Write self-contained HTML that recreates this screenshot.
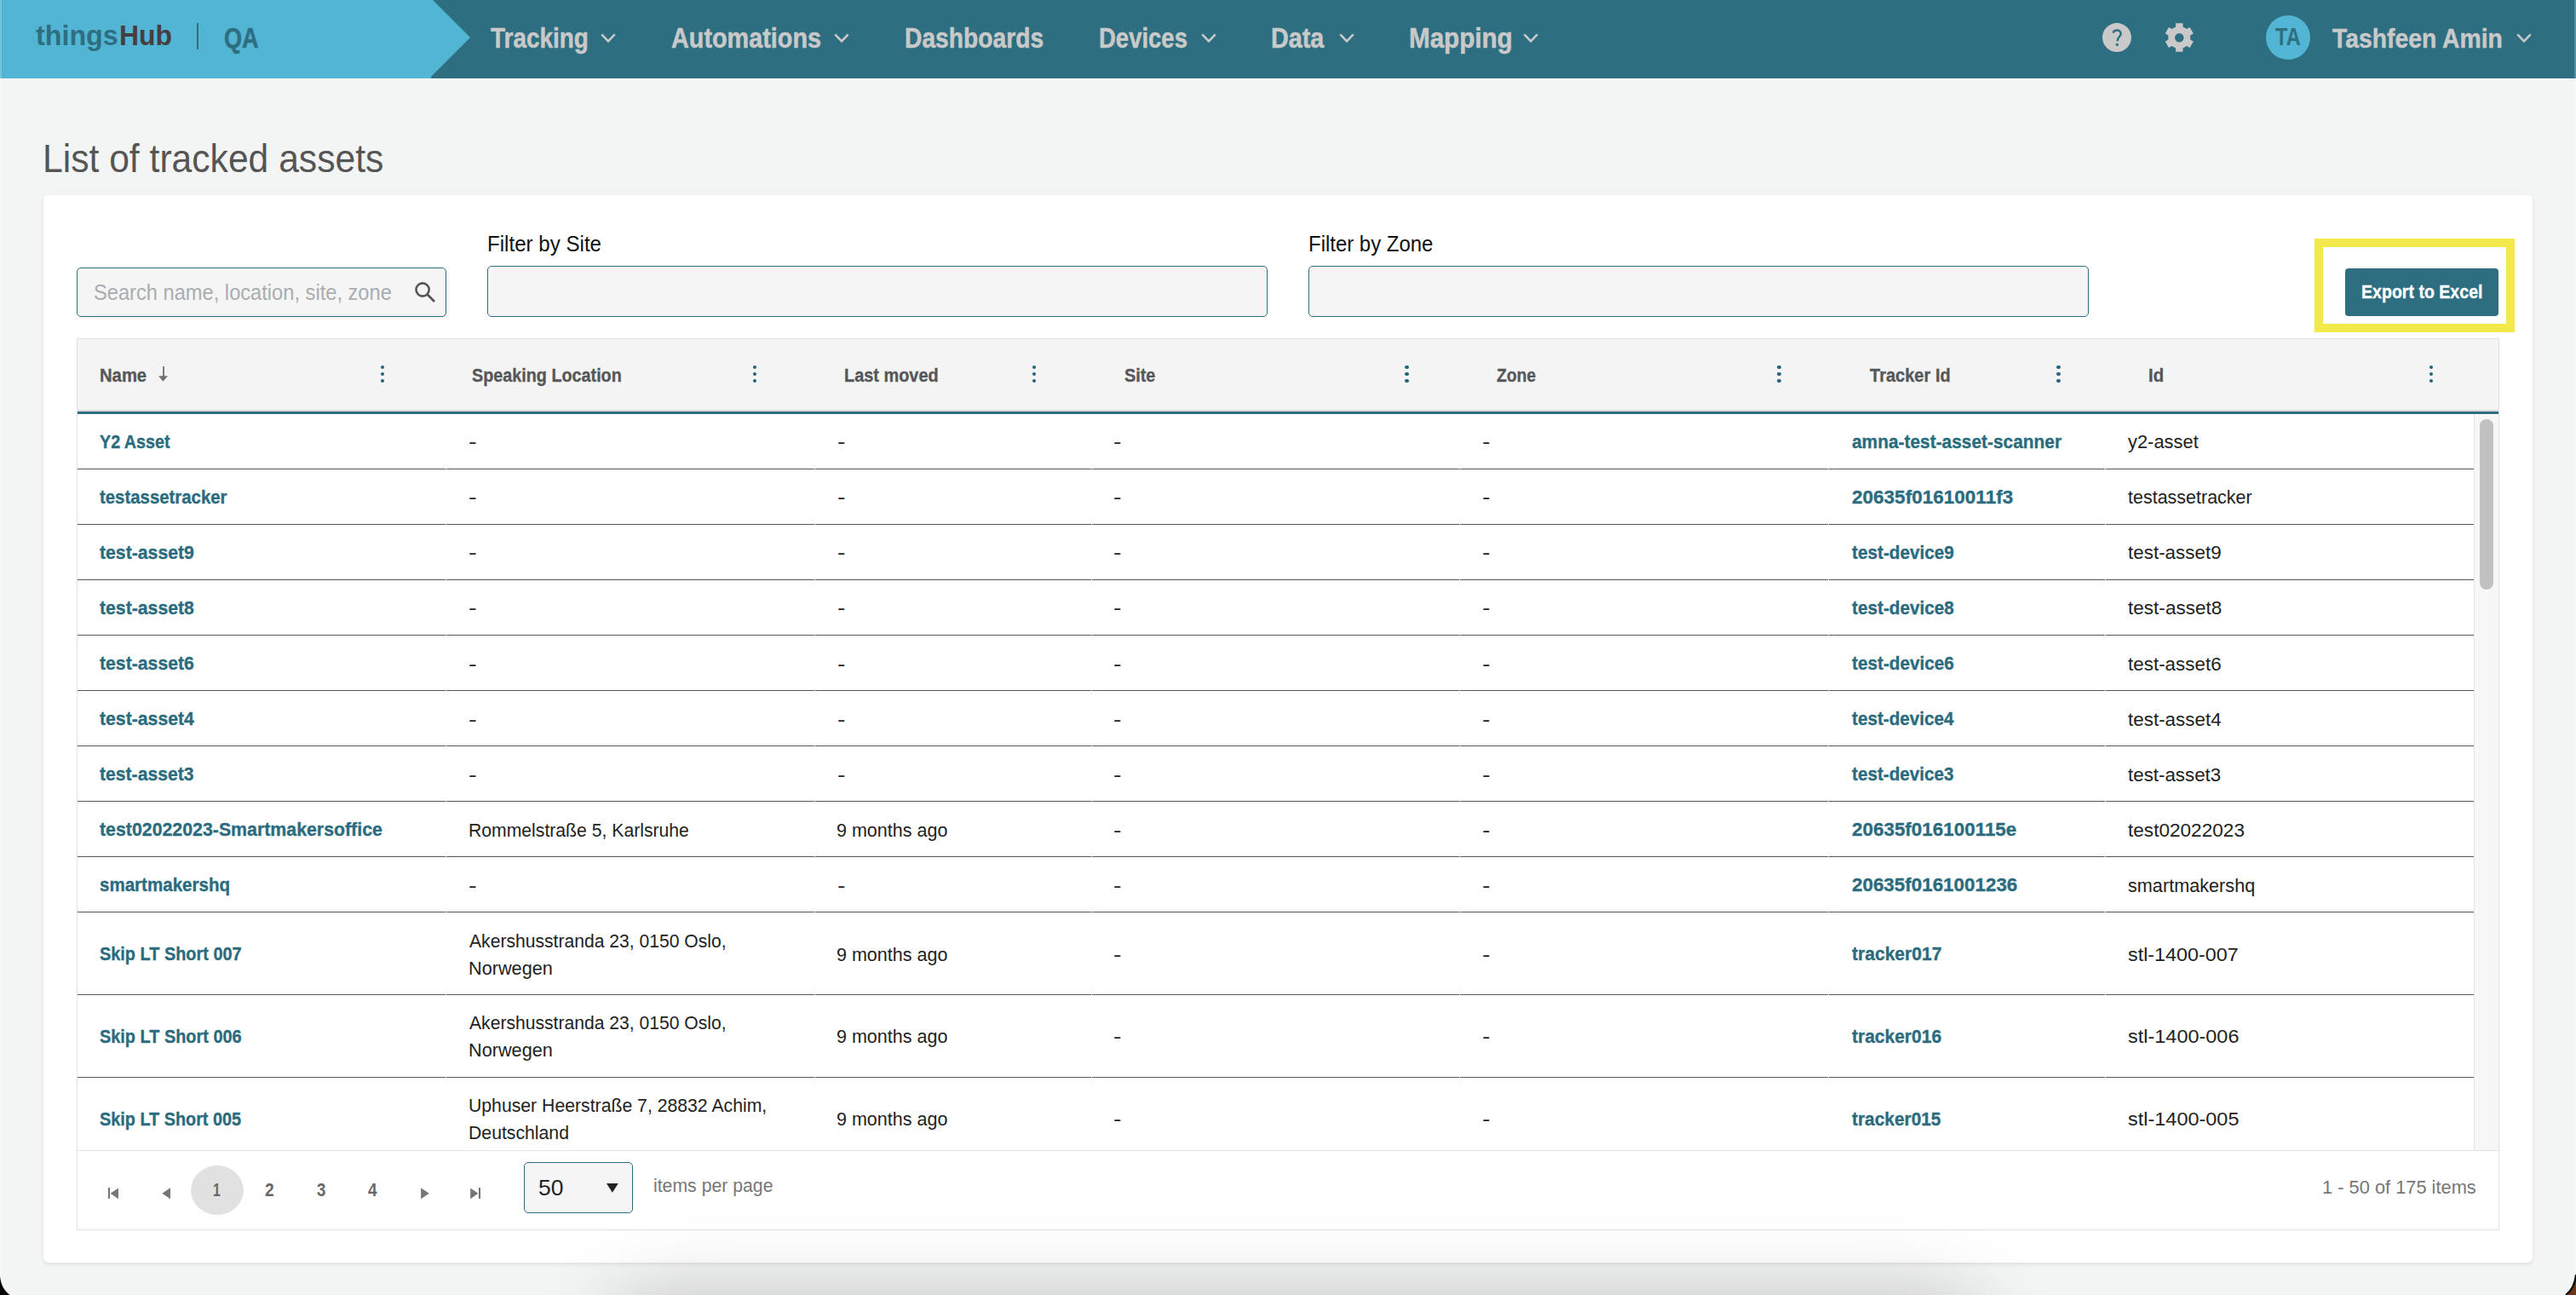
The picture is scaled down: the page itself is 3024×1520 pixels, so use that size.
<!DOCTYPE html>
<html><head><meta charset="utf-8"><style>
html,body{margin:0;padding:0;width:3024px;height:1520px;overflow:hidden;background:#F3F5F4;font-family:"Liberation Sans", sans-serif;}
</style></head><body>
<div style="position:absolute;left:0px;top:0px;width:3024px;height:92px;background:#2E6E81"></div>
<svg style="position:absolute;left:0;top:0" width="600" height="92"><polygon points="0,0 508,0 552,44 506,90 506,92 0,92" fill="#53B5D4"/></svg>
<div style="position:absolute;left:0px;top:0px;width:2px;height:92px;background:#74C4DC"></div>
<div style="position:absolute;left:3022px;top:0px;width:2px;height:92px;background:#5C8E9D"></div>
<div style="position:absolute;left:0px;top:92px;width:2px;height:1428px;background:rgba(255,255,255,0.3)"></div>
<div style="position:absolute;left:3022px;top:92px;width:2px;height:1428px;background:rgba(255,255,255,0.3)"></div>
<div style="position:absolute;left:231px;top:27px;width:2.2px;height:31px;background:#2E6E81"></div>
<svg style="position:absolute;left:703px;top:37.2px" width="22" height="14.5"><polyline points="3.3,3.3 11.0,11.46 18.7,3.3" fill="none" stroke="#C9C9C9" stroke-width="2.6" stroke-linecap="butt"/></svg>
<svg style="position:absolute;left:977px;top:37.2px" width="22" height="14.5"><polyline points="3.3,3.3 11.0,11.46 18.7,3.3" fill="none" stroke="#C9C9C9" stroke-width="2.6" stroke-linecap="butt"/></svg>
<svg style="position:absolute;left:1407.5px;top:37.2px" width="22" height="14.5"><polyline points="3.3,3.3 11.0,11.46 18.7,3.3" fill="none" stroke="#C9C9C9" stroke-width="2.6" stroke-linecap="butt"/></svg>
<svg style="position:absolute;left:1569.5px;top:37.2px" width="22" height="14.5"><polyline points="3.3,3.3 11.0,11.46 18.7,3.3" fill="none" stroke="#C9C9C9" stroke-width="2.6" stroke-linecap="butt"/></svg>
<svg style="position:absolute;left:1786px;top:37.2px" width="22" height="14.5"><polyline points="3.3,3.3 11.0,11.46 18.7,3.3" fill="none" stroke="#C9C9C9" stroke-width="2.6" stroke-linecap="butt"/></svg>
<svg style="position:absolute;left:2467px;top:27px" width="36" height="36" viewBox="0 0 36 36">
<circle cx="18" cy="17.1" r="17" fill="#C9C9C9"/>
<path d="M13.6 11.6 C14.2 9.4 16 8.5 18.1 8.5 C20.8 8.5 22.7 10.2 22.7 12.6 C22.7 15.6 19.7 16.4 19 19.2 L18.7 21.2" fill="none" stroke="#2E6E81" stroke-width="2.4"/>
<circle cx="18.3" cy="25.4" r="1.7" fill="#2E6E81"/>
</svg>
<svg style="position:absolute;left:2540px;top:26px" width="37" height="37" viewBox="0 0 37 37">
<path d="M31.24 15.38 L34.84 13.30 L30.64 6.02 L27.04 8.11 L22.50 5.49 L22.50 1.32 L14.10 1.32 L14.10 5.49 L9.56 8.11 L5.96 6.02 L1.76 13.30 L5.36 15.38 L5.36 20.62 L1.76 22.70 L5.96 29.98 L9.56 27.89 L14.10 30.51 L14.10 34.68 L22.50 34.68 L22.50 30.51 L27.04 27.89 L30.64 29.98 L34.84 22.70 L31.24 20.62 Z" fill="#C9C9C9"/>
<circle cx="18.3" cy="18.2" r="5.2" fill="#2E6E81"/>
</svg>
<div style="position:absolute;left:2660px;top:17.8px;width:52px;height:52px;border-radius:50%;background:#53B5D4"></div>
<svg style="position:absolute;left:2951.8px;top:37.2px" width="22" height="14.5"><polyline points="3.3,3.3 11.0,11.46 18.7,3.3" fill="none" stroke="#C9C9C9" stroke-width="2.6" stroke-linecap="butt"/></svg>
<div style="position:absolute;left:51px;top:229px;width:2922px;height:1253px;background:#fff;border-radius:7px;box-shadow:0 2px 5px rgba(0,0,0,0.09)"></div>
<div style="position:absolute;left:90px;top:314px;width:434px;height:57.5px;box-sizing:border-box;border:1.6px solid #2E6E81;border-radius:5px;background:#F5F5F5;box-shadow:2px 2px 4px rgba(0,0,0,0.06)"></div>
<svg style="position:absolute;left:484px;top:328px" width="30" height="30" viewBox="0 0 30 30">
<circle cx="12.1" cy="12.0" r="7.6" fill="none" stroke="#555" stroke-width="2.6"/>
<line x1="17.6" y1="17.6" x2="26" y2="26" stroke="#555" stroke-width="2.8"/>
</svg>
<div style="position:absolute;left:572px;top:312.2px;width:916px;height:59.5px;box-sizing:border-box;border:1.6px solid #2E6E81;border-radius:5px;background:#F5F5F5"></div>
<div style="position:absolute;left:1536px;top:312.2px;width:916px;height:59.5px;box-sizing:border-box;border:1.6px solid #2E6E81;border-radius:5px;background:#F5F5F5"></div>
<div style="position:absolute;left:2717px;top:280px;width:235px;height:110px;box-sizing:border-box;border:10px solid #F2E94C"></div>
<div style="position:absolute;left:2753px;top:315px;width:180px;height:56px;border-radius:4px;background:#2E6E81"></div>
<div style="position:absolute;left:90px;top:397px;width:2844px;height:1047px;box-sizing:border-box;border:1px solid #E2E2E2"></div>
<div style="position:absolute;left:91px;top:398px;width:2842px;height:83px;background:#F4F4F4"></div>
<div style="position:absolute;left:91px;top:481px;width:2842px;height:2px;background:#DCDCDC"></div>
<div style="position:absolute;left:91px;top:483px;width:2842px;height:3px;background:#2E6E81"></div>
<div style="position:absolute;left:446.70px;top:428.8px;width:4.4px;height:4.4px;border-radius:50%;background:#22657A"></div>
<div style="position:absolute;left:446.70px;top:436.8px;width:4.4px;height:4.4px;border-radius:50%;background:#22657A"></div>
<div style="position:absolute;left:446.70px;top:444.8px;width:4.4px;height:4.4px;border-radius:50%;background:#22657A"></div>
<div style="position:absolute;left:884.00px;top:428.8px;width:4.4px;height:4.4px;border-radius:50%;background:#22657A"></div>
<div style="position:absolute;left:884.00px;top:436.8px;width:4.4px;height:4.4px;border-radius:50%;background:#22657A"></div>
<div style="position:absolute;left:884.00px;top:444.8px;width:4.4px;height:4.4px;border-radius:50%;background:#22657A"></div>
<div style="position:absolute;left:1211.90px;top:428.8px;width:4.4px;height:4.4px;border-radius:50%;background:#22657A"></div>
<div style="position:absolute;left:1211.90px;top:436.8px;width:4.4px;height:4.4px;border-radius:50%;background:#22657A"></div>
<div style="position:absolute;left:1211.90px;top:444.8px;width:4.4px;height:4.4px;border-radius:50%;background:#22657A"></div>
<div style="position:absolute;left:1649.20px;top:428.8px;width:4.4px;height:4.4px;border-radius:50%;background:#22657A"></div>
<div style="position:absolute;left:1649.20px;top:436.8px;width:4.4px;height:4.4px;border-radius:50%;background:#22657A"></div>
<div style="position:absolute;left:1649.20px;top:444.8px;width:4.4px;height:4.4px;border-radius:50%;background:#22657A"></div>
<div style="position:absolute;left:2086.40px;top:428.8px;width:4.4px;height:4.4px;border-radius:50%;background:#22657A"></div>
<div style="position:absolute;left:2086.40px;top:436.8px;width:4.4px;height:4.4px;border-radius:50%;background:#22657A"></div>
<div style="position:absolute;left:2086.40px;top:444.8px;width:4.4px;height:4.4px;border-radius:50%;background:#22657A"></div>
<div style="position:absolute;left:2414.30px;top:428.8px;width:4.4px;height:4.4px;border-radius:50%;background:#22657A"></div>
<div style="position:absolute;left:2414.30px;top:436.8px;width:4.4px;height:4.4px;border-radius:50%;background:#22657A"></div>
<div style="position:absolute;left:2414.30px;top:444.8px;width:4.4px;height:4.4px;border-radius:50%;background:#22657A"></div>
<div style="position:absolute;left:2851.50px;top:428.8px;width:4.4px;height:4.4px;border-radius:50%;background:#22657A"></div>
<div style="position:absolute;left:2851.50px;top:436.8px;width:4.4px;height:4.4px;border-radius:50%;background:#22657A"></div>
<div style="position:absolute;left:2851.50px;top:444.8px;width:4.4px;height:4.4px;border-radius:50%;background:#22657A"></div>
<svg style="position:absolute;left:184px;top:428px" width="16" height="22" viewBox="0 0 16 22">
<line x1="8" y1="2" x2="8" y2="15" stroke="#707070" stroke-width="1.8"/>
<polygon points="2.1,13.2 12.9,13.2 7.5,19.8" fill="#707070"/>
</svg>
<div style="position:absolute;left:91px;top:549.6px;width:2813px;height:1px;background:#56585B"></div>
<div style="position:absolute;left:523.3px;top:549.6px;width:1px;height:1px;background:#DADADA"></div>
<div style="position:absolute;left:956.0px;top:549.6px;width:1px;height:1px;background:#DADADA"></div>
<div style="position:absolute;left:1280.6px;top:549.6px;width:1px;height:1px;background:#DADADA"></div>
<div style="position:absolute;left:1713.4px;top:549.6px;width:1px;height:1px;background:#DADADA"></div>
<div style="position:absolute;left:2146.2px;top:549.6px;width:1px;height:1px;background:#DADADA"></div>
<div style="position:absolute;left:2470.7px;top:549.6px;width:1px;height:1px;background:#DADADA"></div>
<div style="position:absolute;left:91px;top:614.7px;width:2813px;height:1px;background:#56585B"></div>
<div style="position:absolute;left:523.3px;top:614.7px;width:1px;height:1px;background:#DADADA"></div>
<div style="position:absolute;left:956.0px;top:614.7px;width:1px;height:1px;background:#DADADA"></div>
<div style="position:absolute;left:1280.6px;top:614.7px;width:1px;height:1px;background:#DADADA"></div>
<div style="position:absolute;left:1713.4px;top:614.7px;width:1px;height:1px;background:#DADADA"></div>
<div style="position:absolute;left:2146.2px;top:614.7px;width:1px;height:1px;background:#DADADA"></div>
<div style="position:absolute;left:2470.7px;top:614.7px;width:1px;height:1px;background:#DADADA"></div>
<div style="position:absolute;left:91px;top:679.8px;width:2813px;height:1px;background:#56585B"></div>
<div style="position:absolute;left:523.3px;top:679.8px;width:1px;height:1px;background:#DADADA"></div>
<div style="position:absolute;left:956.0px;top:679.8px;width:1px;height:1px;background:#DADADA"></div>
<div style="position:absolute;left:1280.6px;top:679.8px;width:1px;height:1px;background:#DADADA"></div>
<div style="position:absolute;left:1713.4px;top:679.8px;width:1px;height:1px;background:#DADADA"></div>
<div style="position:absolute;left:2146.2px;top:679.8px;width:1px;height:1px;background:#DADADA"></div>
<div style="position:absolute;left:2470.7px;top:679.8px;width:1px;height:1px;background:#DADADA"></div>
<div style="position:absolute;left:91px;top:744.9px;width:2813px;height:1px;background:#56585B"></div>
<div style="position:absolute;left:523.3px;top:744.9px;width:1px;height:1px;background:#DADADA"></div>
<div style="position:absolute;left:956.0px;top:744.9px;width:1px;height:1px;background:#DADADA"></div>
<div style="position:absolute;left:1280.6px;top:744.9px;width:1px;height:1px;background:#DADADA"></div>
<div style="position:absolute;left:1713.4px;top:744.9px;width:1px;height:1px;background:#DADADA"></div>
<div style="position:absolute;left:2146.2px;top:744.9px;width:1px;height:1px;background:#DADADA"></div>
<div style="position:absolute;left:2470.7px;top:744.9px;width:1px;height:1px;background:#DADADA"></div>
<div style="position:absolute;left:91px;top:810.0px;width:2813px;height:1px;background:#56585B"></div>
<div style="position:absolute;left:523.3px;top:810.0px;width:1px;height:1px;background:#DADADA"></div>
<div style="position:absolute;left:956.0px;top:810.0px;width:1px;height:1px;background:#DADADA"></div>
<div style="position:absolute;left:1280.6px;top:810.0px;width:1px;height:1px;background:#DADADA"></div>
<div style="position:absolute;left:1713.4px;top:810.0px;width:1px;height:1px;background:#DADADA"></div>
<div style="position:absolute;left:2146.2px;top:810.0px;width:1px;height:1px;background:#DADADA"></div>
<div style="position:absolute;left:2470.7px;top:810.0px;width:1px;height:1px;background:#DADADA"></div>
<div style="position:absolute;left:91px;top:875.0px;width:2813px;height:1px;background:#56585B"></div>
<div style="position:absolute;left:523.3px;top:875.0px;width:1px;height:1px;background:#DADADA"></div>
<div style="position:absolute;left:956.0px;top:875.0px;width:1px;height:1px;background:#DADADA"></div>
<div style="position:absolute;left:1280.6px;top:875.0px;width:1px;height:1px;background:#DADADA"></div>
<div style="position:absolute;left:1713.4px;top:875.0px;width:1px;height:1px;background:#DADADA"></div>
<div style="position:absolute;left:2146.2px;top:875.0px;width:1px;height:1px;background:#DADADA"></div>
<div style="position:absolute;left:2470.7px;top:875.0px;width:1px;height:1px;background:#DADADA"></div>
<div style="position:absolute;left:91px;top:940.0px;width:2813px;height:1px;background:#56585B"></div>
<div style="position:absolute;left:523.3px;top:940.0px;width:1px;height:1px;background:#DADADA"></div>
<div style="position:absolute;left:956.0px;top:940.0px;width:1px;height:1px;background:#DADADA"></div>
<div style="position:absolute;left:1280.6px;top:940.0px;width:1px;height:1px;background:#DADADA"></div>
<div style="position:absolute;left:1713.4px;top:940.0px;width:1px;height:1px;background:#DADADA"></div>
<div style="position:absolute;left:2146.2px;top:940.0px;width:1px;height:1px;background:#DADADA"></div>
<div style="position:absolute;left:2470.7px;top:940.0px;width:1px;height:1px;background:#DADADA"></div>
<div style="position:absolute;left:91px;top:1005.0px;width:2813px;height:1px;background:#56585B"></div>
<div style="position:absolute;left:523.3px;top:1005.0px;width:1px;height:1px;background:#DADADA"></div>
<div style="position:absolute;left:956.0px;top:1005.0px;width:1px;height:1px;background:#DADADA"></div>
<div style="position:absolute;left:1280.6px;top:1005.0px;width:1px;height:1px;background:#DADADA"></div>
<div style="position:absolute;left:1713.4px;top:1005.0px;width:1px;height:1px;background:#DADADA"></div>
<div style="position:absolute;left:2146.2px;top:1005.0px;width:1px;height:1px;background:#DADADA"></div>
<div style="position:absolute;left:2470.7px;top:1005.0px;width:1px;height:1px;background:#DADADA"></div>
<div style="position:absolute;left:91px;top:1070.0px;width:2813px;height:1px;background:#56585B"></div>
<div style="position:absolute;left:523.3px;top:1070.0px;width:1px;height:1px;background:#DADADA"></div>
<div style="position:absolute;left:956.0px;top:1070.0px;width:1px;height:1px;background:#DADADA"></div>
<div style="position:absolute;left:1280.6px;top:1070.0px;width:1px;height:1px;background:#DADADA"></div>
<div style="position:absolute;left:1713.4px;top:1070.0px;width:1px;height:1px;background:#DADADA"></div>
<div style="position:absolute;left:2146.2px;top:1070.0px;width:1px;height:1px;background:#DADADA"></div>
<div style="position:absolute;left:2470.7px;top:1070.0px;width:1px;height:1px;background:#DADADA"></div>
<div style="position:absolute;left:91px;top:1167.0px;width:2813px;height:1px;background:#56585B"></div>
<div style="position:absolute;left:523.3px;top:1167.0px;width:1px;height:1px;background:#DADADA"></div>
<div style="position:absolute;left:956.0px;top:1167.0px;width:1px;height:1px;background:#DADADA"></div>
<div style="position:absolute;left:1280.6px;top:1167.0px;width:1px;height:1px;background:#DADADA"></div>
<div style="position:absolute;left:1713.4px;top:1167.0px;width:1px;height:1px;background:#DADADA"></div>
<div style="position:absolute;left:2146.2px;top:1167.0px;width:1px;height:1px;background:#DADADA"></div>
<div style="position:absolute;left:2470.7px;top:1167.0px;width:1px;height:1px;background:#DADADA"></div>
<div style="position:absolute;left:91px;top:1263.9px;width:2813px;height:1px;background:#56585B"></div>
<div style="position:absolute;left:523.3px;top:1263.9px;width:1px;height:1px;background:#DADADA"></div>
<div style="position:absolute;left:956.0px;top:1263.9px;width:1px;height:1px;background:#DADADA"></div>
<div style="position:absolute;left:1280.6px;top:1263.9px;width:1px;height:1px;background:#DADADA"></div>
<div style="position:absolute;left:1713.4px;top:1263.9px;width:1px;height:1px;background:#DADADA"></div>
<div style="position:absolute;left:2146.2px;top:1263.9px;width:1px;height:1px;background:#DADADA"></div>
<div style="position:absolute;left:2470.7px;top:1263.9px;width:1px;height:1px;background:#DADADA"></div>
<div style="position:absolute;left:2904px;top:486px;width:29px;height:864px;background:#F7F7F7;border-left:1px solid #E6E6E6;box-sizing:border-box"></div>
<div style="position:absolute;left:2911px;top:492px;width:15.5px;height:200px;border-radius:8px;background:#C1C1C1"></div>
<div style="position:absolute;left:91px;top:1350px;width:2842px;height:1px;background:#E2E2E2"></div>
<svg style="position:absolute;left:0;top:0;overflow:visible" width="1" height="1"><polygon points="129.5,1400.8 139,1394.4 139,1407.2" fill="#767676"/></svg>
<div style="position:absolute;left:127.1px;top:1394.2px;width:1.9px;height:12.8px;background:#767676"></div>
<svg style="position:absolute;left:0;top:0;overflow:visible" width="1" height="1"><polygon points="190.3,1400.8 200,1394.2 200,1407.2" fill="#767676"/></svg>
<div style="position:absolute;left:224px;top:1368px;width:62px;height:58px;border-radius:50%;background:#E1E1E1"></div>
<svg style="position:absolute;left:0;top:0;overflow:visible" width="1" height="1"><polygon points="503.7,1400.8 494.1,1394.2 494.1,1407.2" fill="#767676"/></svg>
<svg style="position:absolute;left:0;top:0;overflow:visible" width="1" height="1"><polygon points="561.3,1400.8 552.2,1394.4 552.2,1407.2" fill="#767676"/></svg>
<div style="position:absolute;left:562px;top:1394.2px;width:1.9px;height:12.8px;background:#767676"></div>
<div style="position:absolute;left:615px;top:1364.1px;width:128px;height:59.5px;box-sizing:border-box;border:1.6px solid #2E6E81;border-radius:5px;background:#F5F5F5"></div>
<svg style="position:absolute;left:0;top:0;overflow:visible" width="1" height="1"><polygon points="712,1389 725.8,1389 718.9,1399.7" fill="#222"/></svg>
<div style="position:absolute;left:720px;top:1528px;width:1600px;height:200px;border-radius:40px;box-shadow:0 0 100px 0 rgba(0,0,0,0.23)"></div>
<svg style="position:absolute;left:0;top:1490px" width="24" height="30"><path d="M0 8 C1 18 5 25 11.5 30 L0 30 Z" fill="#000"/></svg>
<svg style="position:absolute;left:3000px;top:1490px" width="24" height="30"><path d="M12 30 C18.5 25 23 17 24 6 L24 30 Z" fill="#6E3417"/><path d="M12 30 C18.5 25 23 17 24 6" fill="none" stroke="#000" stroke-width="2.2"/></svg>
<div style="position:absolute;left:42.10px;top:19.00px;font-size:34px;line-height:44px;font-weight:700;color:#2E6E81;white-space:nowrap;transform-origin:0 0;transform:scaleX(0.9488)">things</div>
<div style="position:absolute;left:139.92px;top:19.00px;font-size:34px;line-height:44px;font-weight:700;color:#463F40;white-space:nowrap;transform-origin:0 0;transform:scaleX(0.9396)">Hub</div>
<div style="position:absolute;left:263.39px;top:24.00px;font-size:32.52px;line-height:42px;font-weight:700;color:#2E6E81;white-space:nowrap;transform-origin:0 0;transform:scaleX(0.8321);-webkit-text-stroke:0.510px #2E6E81">QA</div>
<div style="position:absolute;left:576.24px;top:24.00px;font-size:32.52px;line-height:42px;font-weight:700;color:#C9C9C9;white-space:nowrap;transform-origin:0 0;transform:scaleX(0.8594);-webkit-text-stroke:0.510px #C9C9C9">Tracking</div>
<div style="position:absolute;left:788.45px;top:24.00px;font-size:32.52px;line-height:42px;font-weight:700;color:#C9C9C9;white-space:nowrap;transform-origin:0 0;transform:scaleX(0.8861);-webkit-text-stroke:0.510px #C9C9C9">Automations</div>
<div style="position:absolute;left:1062.31px;top:24.00px;font-size:32.52px;line-height:42px;font-weight:700;color:#C9C9C9;white-space:nowrap;transform-origin:0 0;transform:scaleX(0.8684);-webkit-text-stroke:0.510px #C9C9C9">Dashboards</div>
<div style="position:absolute;left:1289.54px;top:24.00px;font-size:32.52px;line-height:42px;font-weight:700;color:#C9C9C9;white-space:nowrap;transform-origin:0 0;transform:scaleX(0.8455);-webkit-text-stroke:0.510px #C9C9C9">Devices</div>
<div style="position:absolute;left:1492.08px;top:24.00px;font-size:32.52px;line-height:42px;font-weight:700;color:#C9C9C9;white-space:nowrap;transform-origin:0 0;transform:scaleX(0.8834);-webkit-text-stroke:0.510px #C9C9C9">Data</div>
<div style="position:absolute;left:1653.64px;top:24.00px;font-size:32.52px;line-height:42px;font-weight:700;color:#C9C9C9;white-space:nowrap;transform-origin:0 0;transform:scaleX(0.9097);-webkit-text-stroke:0.510px #C9C9C9">Mapping</div>
<div style="position:absolute;left:2671.10px;top:24.00px;font-size:29px;line-height:38px;font-weight:700;color:#2E6E81;white-space:nowrap;transform-origin:0 0;transform:scaleX(0.8123)">TA</div>
<div style="position:absolute;left:2737.84px;top:25.00px;font-size:31.57px;line-height:41px;font-weight:700;color:#C9C9C9;white-space:nowrap;transform-origin:0 0;transform:scaleX(0.8971);-webkit-text-stroke:0.495px #C9C9C9">Tashfeen Amin</div>
<div style="position:absolute;left:50.22px;top:156.00px;font-size:46px;line-height:60px;font-weight:400;color:#555555;white-space:nowrap;transform-origin:0 0;transform:scaleX(0.9265)">List of tracked assets</div>
<div style="position:absolute;left:109.59px;top:326.00px;font-size:26px;line-height:34px;font-weight:400;color:#A9ADB0;white-space:nowrap;transform-origin:0 0;transform:scaleX(0.9100)">Search name, location, site, zone</div>
<div style="position:absolute;left:571.68px;top:269.00px;font-size:26.5px;line-height:34px;font-weight:400;color:#111;white-space:nowrap;transform-origin:0 0;transform:scaleX(0.9099)">Filter by Site</div>
<div style="position:absolute;left:1535.59px;top:269.00px;font-size:26.5px;line-height:34px;font-weight:400;color:#111;white-space:nowrap;transform-origin:0 0;transform:scaleX(0.9035)">Filter by Zone</div>
<div style="position:absolute;left:2772.12px;top:328.00px;font-size:22.0px;line-height:29px;font-weight:700;color:#FFFFFF;white-space:nowrap;transform-origin:0 0;transform:scaleX(0.8895);-webkit-text-stroke:0.345px #FFFFFF">Export to Excel</div>
<div style="position:absolute;left:117.17px;top:427.00px;font-size:21.43px;line-height:28px;font-weight:700;color:#555759;white-space:nowrap;transform-origin:0 0;transform:scaleX(0.9449);-webkit-text-stroke:0.335px #555759">Name</div>
<div style="position:absolute;left:553.91px;top:427.00px;font-size:21.43px;line-height:28px;font-weight:700;color:#555759;white-space:nowrap;transform-origin:0 0;transform:scaleX(0.9230);-webkit-text-stroke:0.335px #555759">Speaking Location</div>
<div style="position:absolute;left:991.08px;top:427.00px;font-size:21.43px;line-height:28px;font-weight:700;color:#555759;white-space:nowrap;transform-origin:0 0;transform:scaleX(0.9292);-webkit-text-stroke:0.335px #555759">Last moved</div>
<div style="position:absolute;left:1319.51px;top:427.00px;font-size:21.43px;line-height:28px;font-weight:700;color:#555759;white-space:nowrap;transform-origin:0 0;transform:scaleX(0.9265);-webkit-text-stroke:0.335px #555759">Site</div>
<div style="position:absolute;left:1757.30px;top:427.00px;font-size:21.43px;line-height:28px;font-weight:700;color:#555759;white-space:nowrap;transform-origin:0 0;transform:scaleX(0.8994);-webkit-text-stroke:0.335px #555759">Zone</div>
<div style="position:absolute;left:2194.61px;top:427.00px;font-size:21.43px;line-height:28px;font-weight:700;color:#555759;white-space:nowrap;transform-origin:0 0;transform:scaleX(0.9355);-webkit-text-stroke:0.335px #555759">Tracker Id</div>
<div style="position:absolute;left:2522.37px;top:427.00px;font-size:21.43px;line-height:28px;font-weight:700;color:#555759;white-space:nowrap;transform-origin:0 0;transform:scaleX(0.9534);-webkit-text-stroke:0.335px #555759">Id</div>
<div style="position:absolute;left:116.71px;top:505.00px;font-size:21.43px;line-height:28px;font-weight:700;color:#2B6B7E;white-space:nowrap;transform-origin:0 0;transform:scaleX(0.9205);-webkit-text-stroke:0.335px #2B6B7E">Y2 Asset</div>
<div style="position:absolute;left:549.50px;top:504.00px;font-size:22.4px;line-height:29px;font-weight:400;color:#222;white-space:nowrap;transform-origin:0 0;transform:scaleX(1.3000)">-</div>
<div style="position:absolute;left:982.73px;top:504.00px;font-size:22.4px;line-height:29px;font-weight:400;color:#222;white-space:nowrap;transform-origin:0 0;transform:scaleX(1.2667)">-</div>
<div style="position:absolute;left:1307.33px;top:504.00px;font-size:22.4px;line-height:29px;font-weight:400;color:#222;white-space:nowrap;transform-origin:0 0;transform:scaleX(1.2667)">-</div>
<div style="position:absolute;left:1740.03px;top:504.00px;font-size:22.4px;line-height:29px;font-weight:400;color:#222;white-space:nowrap;transform-origin:0 0;transform:scaleX(1.2667)">-</div>
<div style="position:absolute;left:2173.53px;top:505.00px;font-size:21.43px;line-height:28px;font-weight:700;color:#2B6B7E;white-space:nowrap;transform-origin:0 0;transform:scaleX(0.9750);-webkit-text-stroke:0.335px #2B6B7E">amna-test-asset-scanner</div>
<div style="position:absolute;left:2497.50px;top:504.00px;font-size:22.4px;line-height:29px;font-weight:400;color:#222;white-space:nowrap;transform-origin:0 0;transform:scaleX(0.9778)">y2-asset</div>
<div style="position:absolute;left:116.72px;top:570.00px;font-size:21.43px;line-height:28px;font-weight:700;color:#2B6B7E;white-space:nowrap;transform-origin:0 0;transform:scaleX(0.9511);-webkit-text-stroke:0.335px #2B6B7E">testassetracker</div>
<div style="position:absolute;left:549.50px;top:569.00px;font-size:22.4px;line-height:29px;font-weight:400;color:#222;white-space:nowrap;transform-origin:0 0;transform:scaleX(1.3000)">-</div>
<div style="position:absolute;left:982.73px;top:569.00px;font-size:22.4px;line-height:29px;font-weight:400;color:#222;white-space:nowrap;transform-origin:0 0;transform:scaleX(1.2667)">-</div>
<div style="position:absolute;left:1307.33px;top:569.00px;font-size:22.4px;line-height:29px;font-weight:400;color:#222;white-space:nowrap;transform-origin:0 0;transform:scaleX(1.2667)">-</div>
<div style="position:absolute;left:1740.03px;top:569.00px;font-size:22.4px;line-height:29px;font-weight:400;color:#222;white-space:nowrap;transform-origin:0 0;transform:scaleX(1.2667)">-</div>
<div style="position:absolute;left:2173.55px;top:570.00px;font-size:21.43px;line-height:28px;font-weight:700;color:#2B6B7E;white-space:nowrap;transform-origin:0 0;transform:scaleX(1.0518);-webkit-text-stroke:0.335px #2B6B7E">20635f01610011f3</div>
<div style="position:absolute;left:2497.50px;top:569.00px;font-size:22.4px;line-height:29px;font-weight:400;color:#222;white-space:nowrap;transform-origin:0 0;transform:scaleX(0.9596)">testassetracker</div>
<div style="position:absolute;left:116.73px;top:635.00px;font-size:21.43px;line-height:28px;font-weight:700;color:#2B6B7E;white-space:nowrap;transform-origin:0 0;transform:scaleX(0.9903);-webkit-text-stroke:0.335px #2B6B7E">test-asset9</div>
<div style="position:absolute;left:549.50px;top:634.00px;font-size:22.4px;line-height:29px;font-weight:400;color:#222;white-space:nowrap;transform-origin:0 0;transform:scaleX(1.3000)">-</div>
<div style="position:absolute;left:982.73px;top:634.00px;font-size:22.4px;line-height:29px;font-weight:400;color:#222;white-space:nowrap;transform-origin:0 0;transform:scaleX(1.2667)">-</div>
<div style="position:absolute;left:1307.33px;top:634.00px;font-size:22.4px;line-height:29px;font-weight:400;color:#222;white-space:nowrap;transform-origin:0 0;transform:scaleX(1.2667)">-</div>
<div style="position:absolute;left:1740.03px;top:634.00px;font-size:22.4px;line-height:29px;font-weight:400;color:#222;white-space:nowrap;transform-origin:0 0;transform:scaleX(1.2667)">-</div>
<div style="position:absolute;left:2173.52px;top:635.00px;font-size:21.43px;line-height:28px;font-weight:700;color:#2B6B7E;white-space:nowrap;transform-origin:0 0;transform:scaleX(0.9680);-webkit-text-stroke:0.335px #2B6B7E">test-device9</div>
<div style="position:absolute;left:2497.50px;top:634.00px;font-size:22.4px;line-height:29px;font-weight:400;color:#222;white-space:nowrap;transform-origin:0 0;transform:scaleX(1.0013)">test-asset9</div>
<div style="position:absolute;left:116.73px;top:700.00px;font-size:21.43px;line-height:28px;font-weight:700;color:#2B6B7E;white-space:nowrap;transform-origin:0 0;transform:scaleX(0.9903);-webkit-text-stroke:0.335px #2B6B7E">test-asset8</div>
<div style="position:absolute;left:549.50px;top:699.00px;font-size:22.4px;line-height:29px;font-weight:400;color:#222;white-space:nowrap;transform-origin:0 0;transform:scaleX(1.3000)">-</div>
<div style="position:absolute;left:982.73px;top:699.00px;font-size:22.4px;line-height:29px;font-weight:400;color:#222;white-space:nowrap;transform-origin:0 0;transform:scaleX(1.2667)">-</div>
<div style="position:absolute;left:1307.33px;top:699.00px;font-size:22.4px;line-height:29px;font-weight:400;color:#222;white-space:nowrap;transform-origin:0 0;transform:scaleX(1.2667)">-</div>
<div style="position:absolute;left:1740.03px;top:699.00px;font-size:22.4px;line-height:29px;font-weight:400;color:#222;white-space:nowrap;transform-origin:0 0;transform:scaleX(1.2667)">-</div>
<div style="position:absolute;left:2173.52px;top:700.00px;font-size:21.43px;line-height:28px;font-weight:700;color:#2B6B7E;white-space:nowrap;transform-origin:0 0;transform:scaleX(0.9680);-webkit-text-stroke:0.335px #2B6B7E">test-device8</div>
<div style="position:absolute;left:2497.50px;top:699.00px;font-size:22.4px;line-height:29px;font-weight:400;color:#222;white-space:nowrap;transform-origin:0 0;transform:scaleX(1.0077)">test-asset8</div>
<div style="position:absolute;left:116.73px;top:765.00px;font-size:21.43px;line-height:28px;font-weight:700;color:#2B6B7E;white-space:nowrap;transform-origin:0 0;transform:scaleX(0.9903);-webkit-text-stroke:0.335px #2B6B7E">test-asset6</div>
<div style="position:absolute;left:549.50px;top:765.00px;font-size:22.4px;line-height:29px;font-weight:400;color:#222;white-space:nowrap;transform-origin:0 0;transform:scaleX(1.3000)">-</div>
<div style="position:absolute;left:982.73px;top:765.00px;font-size:22.4px;line-height:29px;font-weight:400;color:#222;white-space:nowrap;transform-origin:0 0;transform:scaleX(1.2667)">-</div>
<div style="position:absolute;left:1307.33px;top:765.00px;font-size:22.4px;line-height:29px;font-weight:400;color:#222;white-space:nowrap;transform-origin:0 0;transform:scaleX(1.2667)">-</div>
<div style="position:absolute;left:1740.03px;top:765.00px;font-size:22.4px;line-height:29px;font-weight:400;color:#222;white-space:nowrap;transform-origin:0 0;transform:scaleX(1.2667)">-</div>
<div style="position:absolute;left:2173.52px;top:765.00px;font-size:21.43px;line-height:28px;font-weight:700;color:#2B6B7E;white-space:nowrap;transform-origin:0 0;transform:scaleX(0.9680);-webkit-text-stroke:0.335px #2B6B7E">test-device6</div>
<div style="position:absolute;left:2497.50px;top:765.00px;font-size:22.4px;line-height:29px;font-weight:400;color:#222;white-space:nowrap;transform-origin:0 0;transform:scaleX(1.0013)">test-asset6</div>
<div style="position:absolute;left:116.73px;top:830.00px;font-size:21.43px;line-height:28px;font-weight:700;color:#2B6B7E;white-space:nowrap;transform-origin:0 0;transform:scaleX(0.9903);-webkit-text-stroke:0.335px #2B6B7E">test-asset4</div>
<div style="position:absolute;left:549.50px;top:830.00px;font-size:22.4px;line-height:29px;font-weight:400;color:#222;white-space:nowrap;transform-origin:0 0;transform:scaleX(1.3000)">-</div>
<div style="position:absolute;left:982.73px;top:830.00px;font-size:22.4px;line-height:29px;font-weight:400;color:#222;white-space:nowrap;transform-origin:0 0;transform:scaleX(1.2667)">-</div>
<div style="position:absolute;left:1307.33px;top:830.00px;font-size:22.4px;line-height:29px;font-weight:400;color:#222;white-space:nowrap;transform-origin:0 0;transform:scaleX(1.2667)">-</div>
<div style="position:absolute;left:1740.03px;top:830.00px;font-size:22.4px;line-height:29px;font-weight:400;color:#222;white-space:nowrap;transform-origin:0 0;transform:scaleX(1.2667)">-</div>
<div style="position:absolute;left:2173.52px;top:830.00px;font-size:21.43px;line-height:28px;font-weight:700;color:#2B6B7E;white-space:nowrap;transform-origin:0 0;transform:scaleX(0.9656);-webkit-text-stroke:0.335px #2B6B7E">test-device4</div>
<div style="position:absolute;left:2497.50px;top:830.00px;font-size:22.4px;line-height:29px;font-weight:400;color:#222;white-space:nowrap;transform-origin:0 0;transform:scaleX(1.0013)">test-asset4</div>
<div style="position:absolute;left:116.73px;top:895.00px;font-size:21.43px;line-height:28px;font-weight:700;color:#2B6B7E;white-space:nowrap;transform-origin:0 0;transform:scaleX(0.9868);-webkit-text-stroke:0.335px #2B6B7E">test-asset3</div>
<div style="position:absolute;left:549.50px;top:895.00px;font-size:22.4px;line-height:29px;font-weight:400;color:#222;white-space:nowrap;transform-origin:0 0;transform:scaleX(1.3000)">-</div>
<div style="position:absolute;left:982.73px;top:895.00px;font-size:22.4px;line-height:29px;font-weight:400;color:#222;white-space:nowrap;transform-origin:0 0;transform:scaleX(1.2667)">-</div>
<div style="position:absolute;left:1307.33px;top:895.00px;font-size:22.4px;line-height:29px;font-weight:400;color:#222;white-space:nowrap;transform-origin:0 0;transform:scaleX(1.2667)">-</div>
<div style="position:absolute;left:1740.03px;top:895.00px;font-size:22.4px;line-height:29px;font-weight:400;color:#222;white-space:nowrap;transform-origin:0 0;transform:scaleX(1.2667)">-</div>
<div style="position:absolute;left:2173.52px;top:895.00px;font-size:21.43px;line-height:28px;font-weight:700;color:#2B6B7E;white-space:nowrap;transform-origin:0 0;transform:scaleX(0.9656);-webkit-text-stroke:0.335px #2B6B7E">test-device3</div>
<div style="position:absolute;left:2497.50px;top:895.00px;font-size:22.4px;line-height:29px;font-weight:400;color:#222;white-space:nowrap;transform-origin:0 0;transform:scaleX(0.9976)">test-asset3</div>
<div style="position:absolute;left:116.73px;top:960.00px;font-size:21.43px;line-height:28px;font-weight:700;color:#2B6B7E;white-space:nowrap;transform-origin:0 0;transform:scaleX(0.9953);-webkit-text-stroke:0.335px #2B6B7E">test02022023-Smartmakersoffice</div>
<div style="position:absolute;left:549.55px;top:960.00px;font-size:22.4px;line-height:29px;font-weight:400;color:#222;white-space:nowrap;transform-origin:0 0;transform:scaleX(0.9457)">Rommelstraße 5, Karlsruhe</div>
<div style="position:absolute;left:982.04px;top:960.00px;font-size:22.4px;line-height:29px;font-weight:400;color:#222;white-space:nowrap;transform-origin:0 0;transform:scaleX(0.9611)">9 months ago</div>
<div style="position:absolute;left:1307.33px;top:960.00px;font-size:22.4px;line-height:29px;font-weight:400;color:#222;white-space:nowrap;transform-origin:0 0;transform:scaleX(1.2667)">-</div>
<div style="position:absolute;left:1740.03px;top:960.00px;font-size:22.4px;line-height:29px;font-weight:400;color:#222;white-space:nowrap;transform-origin:0 0;transform:scaleX(1.2667)">-</div>
<div style="position:absolute;left:2173.55px;top:960.00px;font-size:21.43px;line-height:28px;font-weight:700;color:#2B6B7E;white-space:nowrap;transform-origin:0 0;transform:scaleX(1.0468);-webkit-text-stroke:0.335px #2B6B7E">20635f016100115e</div>
<div style="position:absolute;left:2497.50px;top:960.00px;font-size:22.4px;line-height:29px;font-weight:400;color:#222;white-space:nowrap;transform-origin:0 0;transform:scaleX(1.0092)">test02022023</div>
<div style="position:absolute;left:116.72px;top:1025.00px;font-size:21.43px;line-height:28px;font-weight:700;color:#2B6B7E;white-space:nowrap;transform-origin:0 0;transform:scaleX(0.9589);-webkit-text-stroke:0.335px #2B6B7E">smartmakershq</div>
<div style="position:absolute;left:549.50px;top:1025.00px;font-size:22.4px;line-height:29px;font-weight:400;color:#222;white-space:nowrap;transform-origin:0 0;transform:scaleX(1.3000)">-</div>
<div style="position:absolute;left:982.73px;top:1025.00px;font-size:22.4px;line-height:29px;font-weight:400;color:#222;white-space:nowrap;transform-origin:0 0;transform:scaleX(1.2667)">-</div>
<div style="position:absolute;left:1307.33px;top:1025.00px;font-size:22.4px;line-height:29px;font-weight:400;color:#222;white-space:nowrap;transform-origin:0 0;transform:scaleX(1.2667)">-</div>
<div style="position:absolute;left:1740.03px;top:1025.00px;font-size:22.4px;line-height:29px;font-weight:400;color:#222;white-space:nowrap;transform-origin:0 0;transform:scaleX(1.2667)">-</div>
<div style="position:absolute;left:2173.55px;top:1025.00px;font-size:21.43px;line-height:28px;font-weight:700;color:#2B6B7E;white-space:nowrap;transform-origin:0 0;transform:scaleX(1.0456);-webkit-text-stroke:0.335px #2B6B7E">20635f0161001236</div>
<div style="position:absolute;left:2497.50px;top:1025.00px;font-size:22.4px;line-height:29px;font-weight:400;color:#222;white-space:nowrap;transform-origin:0 0;transform:scaleX(0.9673)">smartmakershq</div>
<div style="position:absolute;left:116.71px;top:1106.00px;font-size:21.43px;line-height:28px;font-weight:700;color:#2B6B7E;white-space:nowrap;transform-origin:0 0;transform:scaleX(0.9291);-webkit-text-stroke:0.335px #2B6B7E">Skip LT Short 007</div>
<div style="position:absolute;left:550.50px;top:1090.00px;font-size:22.4px;line-height:29px;font-weight:400;color:#222;white-space:nowrap;transform-origin:0 0;transform:scaleX(0.9430)">Akershusstranda 23, 0150 Oslo,</div>
<div style="position:absolute;left:549.53px;top:1122.00px;font-size:22.4px;line-height:29px;font-weight:400;color:#222;white-space:nowrap;transform-origin:0 0;transform:scaleX(0.9688)">Norwegen</div>
<div style="position:absolute;left:982.04px;top:1106.00px;font-size:22.4px;line-height:29px;font-weight:400;color:#222;white-space:nowrap;transform-origin:0 0;transform:scaleX(0.9611)">9 months ago</div>
<div style="position:absolute;left:1307.33px;top:1106.00px;font-size:22.4px;line-height:29px;font-weight:400;color:#222;white-space:nowrap;transform-origin:0 0;transform:scaleX(1.2667)">-</div>
<div style="position:absolute;left:1740.03px;top:1106.00px;font-size:22.4px;line-height:29px;font-weight:400;color:#222;white-space:nowrap;transform-origin:0 0;transform:scaleX(1.2667)">-</div>
<div style="position:absolute;left:2173.53px;top:1106.00px;font-size:21.43px;line-height:28px;font-weight:700;color:#2B6B7E;white-space:nowrap;transform-origin:0 0;transform:scaleX(0.9835);-webkit-text-stroke:0.335px #2B6B7E">tracker017</div>
<div style="position:absolute;left:2497.50px;top:1106.00px;font-size:22.4px;line-height:29px;font-weight:400;color:#222;white-space:nowrap;transform-origin:0 0;transform:scaleX(1.0426)">stl-1400-007</div>
<div style="position:absolute;left:116.71px;top:1203.00px;font-size:21.43px;line-height:28px;font-weight:700;color:#2B6B7E;white-space:nowrap;transform-origin:0 0;transform:scaleX(0.9289);-webkit-text-stroke:0.335px #2B6B7E">Skip LT Short 006</div>
<div style="position:absolute;left:550.50px;top:1186.00px;font-size:22.4px;line-height:29px;font-weight:400;color:#222;white-space:nowrap;transform-origin:0 0;transform:scaleX(0.9430)">Akershusstranda 23, 0150 Oslo,</div>
<div style="position:absolute;left:549.53px;top:1218.00px;font-size:22.4px;line-height:29px;font-weight:400;color:#222;white-space:nowrap;transform-origin:0 0;transform:scaleX(0.9688)">Norwegen</div>
<div style="position:absolute;left:982.04px;top:1202.00px;font-size:22.4px;line-height:29px;font-weight:400;color:#222;white-space:nowrap;transform-origin:0 0;transform:scaleX(0.9611)">9 months ago</div>
<div style="position:absolute;left:1307.33px;top:1202.00px;font-size:22.4px;line-height:29px;font-weight:400;color:#222;white-space:nowrap;transform-origin:0 0;transform:scaleX(1.2667)">-</div>
<div style="position:absolute;left:1740.03px;top:1202.00px;font-size:22.4px;line-height:29px;font-weight:400;color:#222;white-space:nowrap;transform-origin:0 0;transform:scaleX(1.2667)">-</div>
<div style="position:absolute;left:2173.53px;top:1203.00px;font-size:21.43px;line-height:28px;font-weight:700;color:#2B6B7E;white-space:nowrap;transform-origin:0 0;transform:scaleX(0.9800);-webkit-text-stroke:0.335px #2B6B7E">tracker016</div>
<div style="position:absolute;left:2497.50px;top:1202.00px;font-size:22.4px;line-height:29px;font-weight:400;color:#222;white-space:nowrap;transform-origin:0 0;transform:scaleX(1.0482)">stl-1400-006</div>
<div style="position:absolute;left:116.71px;top:1300.00px;font-size:21.43px;line-height:28px;font-weight:700;color:#2B6B7E;white-space:nowrap;transform-origin:0 0;transform:scaleX(0.9261);-webkit-text-stroke:0.335px #2B6B7E">Skip LT Short 005</div>
<div style="position:absolute;left:549.55px;top:1283.00px;font-size:22.4px;line-height:29px;font-weight:400;color:#222;white-space:nowrap;transform-origin:0 0;transform:scaleX(0.9475)">Uphuser Heerstraße 7, 28832 Achim,</div>
<div style="position:absolute;left:549.55px;top:1315.00px;font-size:22.4px;line-height:29px;font-weight:400;color:#222;white-space:nowrap;transform-origin:0 0;transform:scaleX(0.9478)">Deutschland</div>
<div style="position:absolute;left:982.04px;top:1299.00px;font-size:22.4px;line-height:29px;font-weight:400;color:#222;white-space:nowrap;transform-origin:0 0;transform:scaleX(0.9611)">9 months ago</div>
<div style="position:absolute;left:1307.33px;top:1299.00px;font-size:22.4px;line-height:29px;font-weight:400;color:#222;white-space:nowrap;transform-origin:0 0;transform:scaleX(1.2667)">-</div>
<div style="position:absolute;left:1740.03px;top:1299.00px;font-size:22.4px;line-height:29px;font-weight:400;color:#222;white-space:nowrap;transform-origin:0 0;transform:scaleX(1.2667)">-</div>
<div style="position:absolute;left:2173.53px;top:1300.00px;font-size:21.43px;line-height:28px;font-weight:700;color:#2B6B7E;white-space:nowrap;transform-origin:0 0;transform:scaleX(0.9744);-webkit-text-stroke:0.335px #2B6B7E">tracker015</div>
<div style="position:absolute;left:2497.50px;top:1299.00px;font-size:22.4px;line-height:29px;font-weight:400;color:#222;white-space:nowrap;transform-origin:0 0;transform:scaleX(1.0482)">stl-1400-005</div>
<div style="position:absolute;left:250.20px;top:1382.00px;font-size:22.4px;line-height:29px;font-weight:700;color:#676767;white-space:nowrap;transform-origin:0 0;transform:scaleX(0.7000)">1</div>
<div style="position:absolute;left:311.10px;top:1382.00px;font-size:22.4px;line-height:29px;font-weight:700;color:#676767;white-space:nowrap;transform-origin:0 0;transform:scaleX(0.8583)">2</div>
<div style="position:absolute;left:372.00px;top:1382.00px;font-size:22.4px;line-height:29px;font-weight:700;color:#676767;white-space:nowrap;transform-origin:0 0;transform:scaleX(0.8333)">3</div>
<div style="position:absolute;left:432.00px;top:1382.00px;font-size:22.4px;line-height:29px;font-weight:700;color:#676767;white-space:nowrap;transform-origin:0 0;transform:scaleX(0.8462)">4</div>
<div style="position:absolute;left:631.58px;top:1377.00px;font-size:26px;line-height:34px;font-weight:400;color:#222;white-space:nowrap;transform-origin:0 0;transform:scaleX(1.0197)">50</div>
<div style="position:absolute;left:766.55px;top:1377.00px;font-size:22.4px;line-height:29px;font-weight:400;color:#777777;white-space:nowrap;transform-origin:0 0;transform:scaleX(0.9485)">items per page</div>
<div style="position:absolute;left:2726.43px;top:1379.00px;font-size:22.4px;line-height:29px;font-weight:400;color:#777777;white-space:nowrap;transform-origin:0 0;transform:scaleX(0.9748)">1 - 50 of 175 items</div>
</body></html>
